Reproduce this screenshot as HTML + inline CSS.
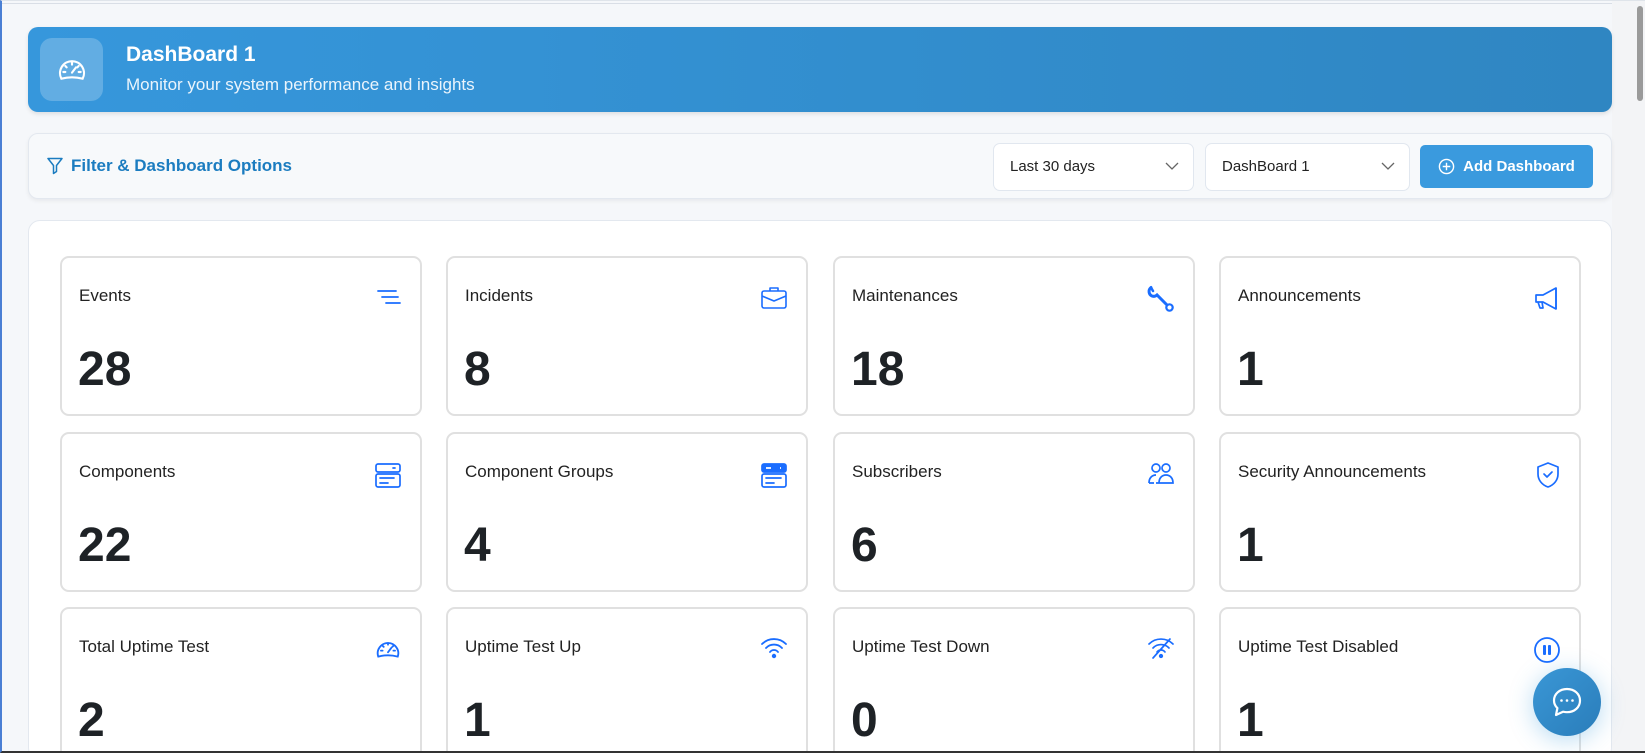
<!DOCTYPE html>
<html style="overflow:hidden;width:1645px;height:753px"><head><meta charset="utf-8"><style>
*{box-sizing:border-box;margin:0;padding:0}
body{width:1645px;height:753px;overflow:hidden;background:#f5f7fa;font-family:"Liberation Sans",sans-serif;position:relative}
.frame{position:absolute;left:0;top:0;width:1645px;height:753px;border-left:2px solid #4a7fd4;border-top:1px solid #dfe4ea;border-bottom:2px solid #333;pointer-events:none;z-index:5}
.top{position:absolute;left:0;right:0;top:0;height:4px;border-bottom:1px solid #d9dee6}
.sb{position:absolute;right:0;top:0;width:33px;height:753px;background:#f3f4f6}
.sb i{position:absolute;right:2px;top:6px;width:6px;height:95px;background:#9a9a9a;border-radius:3px}
.banner{position:absolute;left:28px;top:27px;width:1584px;height:85px;border-radius:10px;background:linear-gradient(90deg,#3697dc,#2f86c2);box-shadow:0 2px 4px rgba(0,0,0,.1)}
.ib{position:absolute;left:12px;top:11px;width:63px;height:63px;border-radius:12px;background:rgba(255,255,255,.22);display:flex;align-items:center;justify-content:center}
.banner h1{position:absolute;left:98px;top:16px;color:#fff;font-size:21px;font-weight:bold}
.banner p{position:absolute;left:98px;top:48px;color:#eaf4fc;font-size:17px}
.filter{position:absolute;left:28px;top:133px;width:1584px;height:66px;border-radius:10px;background:#f7f9fb;border:1px solid #e3e8ef;box-shadow:0 2px 4px rgba(0,0,0,.06)}
.ft{position:absolute;left:18px;top:22px;color:#1b7cc0;font-size:17px;font-weight:bold;display:flex;align-items:center;gap:8px}
.sel{position:absolute;top:9px;height:48px;background:#fff;border:1.5px solid #e1e7ef;border-radius:7px;font-size:15px;color:#222;padding:14px 0 0 16px}
.sel svg{position:absolute;right:14px;top:18px}
.btn{position:absolute;left:1391px;top:11px;width:173px;height:43px;background:#3a9ade;border-radius:5px;color:#fff;font-weight:bold;font-size:15px;display:flex;align-items:center;justify-content:center;gap:8px}
.panel{position:absolute;left:28px;top:220px;width:1584px;height:540px;background:#fff;border:1px solid #e3e8ef;border-radius:12px}
.card{position:absolute;width:362px;height:160px;border:2px solid #e0e0e0;border-radius:9px;background:#fff}
.card .l{position:absolute;left:17px;top:28px;font-size:17px;color:#222}
.card .n{position:absolute;left:16px;top:84px;font-size:48px;font-weight:bold;color:#1e2226}
.card svg{position:absolute;right:18px;top:27px}
.chat{position:absolute;left:1533px;top:668px;width:68px;height:68px;border-radius:50%;background:linear-gradient(135deg,#3a97d6,#2a7dba);box-shadow:0 4px 24px rgba(52,152,219,.35);display:flex;align-items:center;justify-content:center;z-index:4}
.clip{position:absolute;left:0;top:0;width:1645px;height:753px;overflow:hidden}
</style></head><body>
<div class="clip">
<div class="top"></div>
<div class="sb"><i></i></div>
<div class="banner">
 <div class="ib"><svg width="32" height="32" viewBox="0 0 24 24" fill="none" stroke="#fff" stroke-width="1.6" stroke-linecap="round"><path d="M4 18.5a9 9 0 1 1 16 0 c-5-1.3-11-1.3-16 0z"/><path d="M12 14l3-4M12 6.5v1.5M7 9l1 1M17 9l-1 1M5.5 13.5H7M17 13.5h1.5"/></svg></div>
 <h1>DashBoard 1</h1><p>Monitor your system performance and insights</p>
</div>
<div class="filter">
 <div class="ft"><svg width="16" height="18" viewBox="0 0 16 18" fill="none" stroke="#1b7cc0" stroke-width="1.5" stroke-linejoin="round"><path d="M1 1.5h14l-5.5 7v6l-3 2v-8z"/></svg>Filter &amp; Dashboard Options</div>
 <div class="sel" style="left:964px;width:201px">Last 30 days<svg width="14" height="8"><path d="M1 1l6 6 6-6" fill="none" stroke="#666" stroke-width="1.3"/></svg></div>
 <div class="sel" style="left:1176px;width:205px">DashBoard 1<svg width="14" height="8"><path d="M1 1l6 6 6-6" fill="none" stroke="#666" stroke-width="1.3"/></svg></div>
 <div class="btn"><svg width="17" height="17" viewBox="0 0 18 18" fill="none" stroke="#fff" stroke-width="1.5"><circle cx="9" cy="9" r="7.5"/><path d="M9 5v8M5 9h8"/></svg>Add Dashboard</div>
</div>
<div class="panel"></div>

<div class="card" style="left:60px;top:256px"><div class="l">Events</div><div class="n">28</div><svg width="26" height="26" viewBox="0 0 26 26" fill="none" stroke="#1a6dff" stroke-width="1.8" stroke-linecap="round"><path d="M2 6h18M6 12h16M10 18h14"/></svg></div>
<div class="card" style="left:446px;top:256px"><div class="l">Incidents</div><div class="n">8</div><svg width="28" height="26" viewBox="0 0 28 26" fill="none" stroke="#1a6dff" stroke-width="1.6" stroke-linejoin="round"><rect x="2" y="6" width="24" height="17" rx="2"/><path d="M10 6V3h8v3M2 11l12 5 12-5"/></svg></div>
<div class="card" style="left:833px;top:256px"><div class="l">Maintenances</div><div class="n">18</div><svg width="28" height="28" viewBox="0 0 28 28" fill="none" stroke="#1a6dff" stroke-linecap="round"><path d="M4 2.5a5 5 0 0 0 1 8.5a5 5 0 0 0 5-1L20 20" stroke-width="3"/><path d="M4 2.5L6 6" stroke-width="2.5"/><circle cx="22.5" cy="22.5" r="3.2" stroke-width="2.2"/></svg></div>
<div class="card" style="left:1219px;top:256px"><div class="l">Announcements</div><div class="n">1</div><svg width="28" height="28" viewBox="0 0 28 28" fill="none" stroke="#1a6dff" stroke-width="1.7" stroke-linejoin="round"><path d="M3 10h7l13-7v21l-13-7H3z"/><path d="M23 3v21M5 17l2 6h3l-1-6"/></svg></div>

<div class="card" style="left:60px;top:432px"><div class="l">Components</div><div class="n">22</div><svg width="28" height="28" viewBox="0 0 28 28" fill="none" stroke="#1a6dff" stroke-width="1.7"><rect x="2" y="3" width="24" height="8" rx="2"/><rect x="2" y="13" width="24" height="13" rx="2"/><path d="M19 7h2M6 17h14M6 22h8" stroke-linecap="round"/></svg></div>
<div class="card" style="left:446px;top:432px"><div class="l">Component Groups</div><div class="n">4</div><svg width="28" height="28" viewBox="0 0 28 28" fill="none" stroke="#1a6dff" stroke-width="1.7"><rect x="2" y="3" width="24" height="8" rx="2" fill="#1a6dff"/><rect x="2" y="13" width="24" height="13" rx="2"/><path d="M6 7h5M20 7h1" stroke="#fff"/><path d="M6 17h15M6 22h8" stroke-linecap="round"/></svg></div>
<div class="card" style="left:833px;top:432px"><div class="l">Subscribers</div><div class="n">6</div><svg width="28" height="26" viewBox="0 0 28 26" fill="none" stroke="#1a6dff" stroke-width="1.7"><circle cx="9" cy="7" r="4"/><circle cx="19" cy="7" r="4"/><path d="M2 22c0-5 3-8 7-8M9 22h17c0-5-3-8-7-8s-7 3-7 8M2 22h5"/></svg></div>
<div class="card" style="left:1219px;top:432px"><div class="l">Security Announcements</div><div class="n">1</div><svg width="26" height="28" viewBox="0 0 26 28" fill="none" stroke="#1a6dff" stroke-width="1.7" stroke-linejoin="round"><path d="M13 2l10 4v7c0 6-4 11-10 13C7 24 3 19 3 13V6z"/><path d="M9 13l3 3 5-5" stroke-linecap="round"/></svg></div>

<div class="card" style="left:60px;top:607px"><div class="l">Total Uptime Test</div><div class="n">2</div><svg width="28" height="26" viewBox="0 0 24 24" fill="none" stroke="#1a6dff" stroke-width="1.7" stroke-linecap="round"><path d="M3 19a9.5 9.5 0 1 1 18 0c-5.5-1.4-12.5-1.4-18 0z"/><path d="M12 15l3-4M12 6.5V8M7 9l1 1M17 9l-1 1M5.5 13.5H7M17 13.5h1.5"/></svg></div>
<div class="card" style="left:446px;top:607px"><div class="l">Uptime Test Up</div><div class="n">1</div><svg width="28" height="24" viewBox="0 0 28 24" fill="none" stroke="#1a6dff" stroke-width="1.8" stroke-linecap="round"><path d="M2 8a17 17 0 0 1 24 0M6 12a11 11 0 0 1 16 0M10 16a5 5 0 0 1 8 0"/><circle cx="14" cy="20" r="1.3" fill="#1a6dff"/></svg></div>
<div class="card" style="left:833px;top:607px"><div class="l">Uptime Test Down</div><div class="n">0</div><svg width="28" height="24" viewBox="0 0 28 24" fill="none" stroke="#1a6dff" stroke-width="1.7" stroke-linecap="round"><path d="M2 8a17 17 0 0 1 24 0M6 12a11 11 0 0 1 16 0M10 16a5 5 0 0 1 8 0M6 22L23 3"/><circle cx="14" cy="20" r="1.3" fill="#1a6dff"/></svg></div>
<div class="card" style="left:1219px;top:607px"><div class="l">Uptime Test Disabled</div><div class="n">1</div><svg width="28" height="28" viewBox="0 0 28 28"><circle cx="14" cy="14" r="12" fill="none" stroke="#1a6dff" stroke-width="1.8"/><rect x="10" y="9" width="3" height="10" rx="1" fill="#1a6dff"/><rect x="15" y="9" width="3" height="10" rx="1" fill="#1a6dff"/></svg></div>

<div class="chat"><svg width="34" height="34" viewBox="0 0 34 34" fill="none" stroke="#fff" stroke-width="2.2" stroke-linejoin="round"><path d="M17 4C9.5 4 4 9 4 15.5c0 3 1.3 5.6 3.4 7.6L6 30l7-3.3c1.3.3 2.6.5 4 .5 7.5 0 13-5 13-11.6S24.5 4 17 4z"/><circle cx="11.5" cy="15.5" r="1.3" fill="#fff" stroke="none"/><circle cx="17" cy="15.5" r="1.3" fill="#fff" stroke="none"/><circle cx="22.5" cy="15.5" r="1.3" fill="#fff" stroke="none"/></svg></div>
<div class="frame"></div>
</div>
</body></html>
